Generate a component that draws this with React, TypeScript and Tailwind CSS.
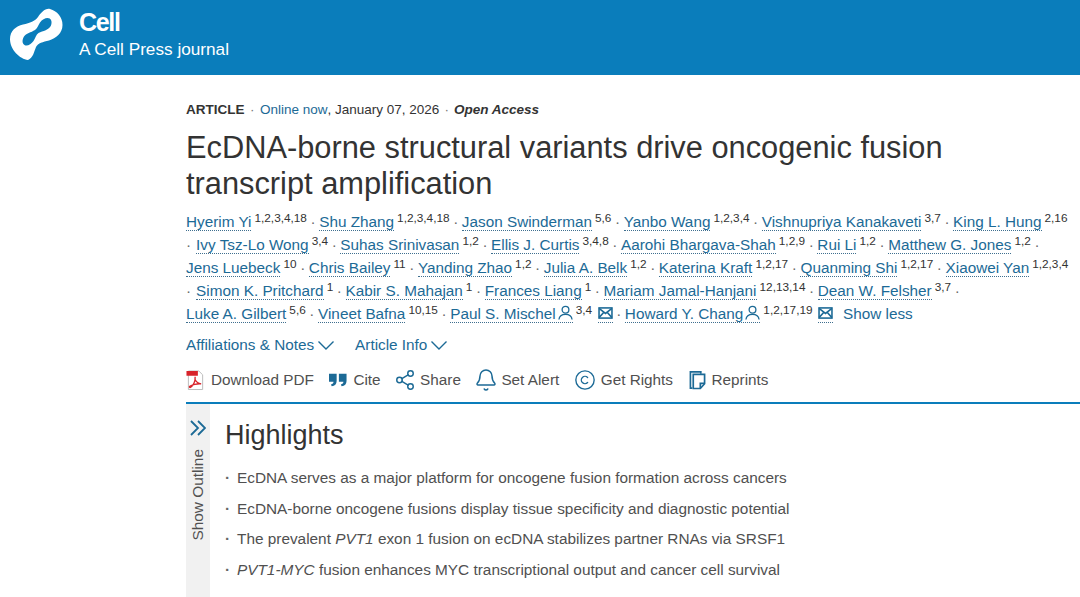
import { Copyright, Share2, Bell } from "lucide-react";

type Author = { name: string; sup?: string; person?: boolean; mail?: boolean };

const AUTHOR_LINES: { lead?: boolean; trail?: boolean; authors: Author[] }[] = [
  {
    authors: [
      { name: "Hyerim Yi", sup: "1,2,3,4,18" },
      { name: "Shu Zhang", sup: "1,2,3,4,18" },
      { name: "Jason Swinderman", sup: "5,6" },
      { name: "Yanbo Wang", sup: "1,2,3,4" },
      { name: "Vishnupriya Kanakaveti", sup: "3,7" },
      { name: "King L. Hung", sup: "2,16" },
    ],
  },
  {
    lead: true,
    trail: true,
    authors: [
      { name: "Ivy Tsz-Lo Wong", sup: "3,4" },
      { name: "Suhas Srinivasan", sup: "1,2" },
      { name: "Ellis J. Curtis", sup: "3,4,8" },
      { name: "Aarohi Bhargava-Shah", sup: "1,2,9" },
      { name: "Rui Li", sup: "1,2" },
      { name: "Matthew G. Jones", sup: "1,2" },
    ],
  },
  {
    authors: [
      { name: "Jens Luebeck", sup: "10" },
      { name: "Chris Bailey", sup: "11" },
      { name: "Yanding Zhao", sup: "1,2" },
      { name: "Julia A. Belk", sup: "1,2" },
      { name: "Katerina Kraft", sup: "1,2,17" },
      { name: "Quanming Shi", sup: "1,2,17" },
      { name: "Xiaowei Yan", sup: "1,2,3,4" },
    ],
  },
  {
    lead: true,
    trail: true,
    authors: [
      { name: "Simon K. Pritchard", sup: "1" },
      { name: "Kabir S. Mahajan", sup: "1" },
      { name: "Frances Liang", sup: "1" },
      { name: "Mariam Jamal-Hanjani", sup: "12,13,14" },
      { name: "Dean W. Felsher", sup: "3,7" },
    ],
  },
  {
    authors: [
      { name: "Luke A. Gilbert", sup: "5,6" },
      { name: "Vineet Bafna", sup: "10,15" },
      { name: "Paul S. Mischel", sup: "3,4", person: true, mail: true },
      { name: "Howard Y. Chang", sup: "1,2,17,19", person: true, mail: true },
    ],
  },
];

function Dot() {
  return <span className="mx-[3.600px] text-[#6b6b6b]">·</span>;
}

function PersonIcon() {
  return (
    <svg viewBox="0 0 16 16" className="ml-[2px] inline h-[15px] w-[15px] align-[-1px]" fill="none" stroke="currentColor" strokeWidth="1.4">
      <circle cx="8" cy="5" r="3.6" />
      <path d="M1 15.500c.4-3.500 3-5.500 7-5.500s6.600 2 7 5.500" />
    </svg>
  );
}

function MailIcon() {
  return (
    <svg viewBox="0 0 16 13" className="inline h-[12px] w-[15px] align-[0px]" fill="none" stroke="currentColor" strokeWidth="1.700">
      <rect x="1" y="1" width="14" height="11" />
      <path d="M1 1.500l7 5.500 7-5.500M1 11.500l5-5.500M15 11.500l-5-5.500" />
    </svg>
  );
}

function AuthorName({ author }: { author: Author }) {
  return (
    <>
      <span className="border-b border-dotted border-[#3f6f8f] text-[#1c6a96]">
        {author.name}
        {author.person && <PersonIcon />}
      </span>
      <sup className="ml-[3px] top-[-5px] text-[11.800px] text-[#333]">{author.sup}</sup>
      {author.mail && (
        <span className="ml-[5.500px] border-b border-dotted border-[#3f6f8f] text-[#1c6a96]">
          <MailIcon />
        </span>
      )}
    </>
  );
}

function Chevron() {
  return (
    <svg viewBox="0 0 16 9" className="h-[9px] w-[16px]" fill="none" stroke="currentColor" strokeWidth="1.400">
      <path d="M.5.500 8 8 15.500.5" />
    </svg>
  );
}

function PdfIcon() {
  return (
    <svg viewBox="0 0 20 22" className="h-[21px] w-[19px]">
      <path d="M2.500 1h11l4 4v15.500h-15z" fill="#fff" stroke="#b9b9b9" strokeWidth="1" />
      <rect x="0.5" y="1" width="12" height="5" fill="#d8232a" />
      <path d="M5 18c3-2 5-7 4.600-11M5 18c-1 1-2 0-1-1 2-1.500 8-3 12-2.500M9.500 10c1 2 3 4 6.500 4.500" fill="none" stroke="#d8232a" strokeWidth="1.400" />
    </svg>
  );
}

function QuoteIcon() {
  return (
    <svg viewBox="0 0 20 16" className="h-[16px] w-[18px]" fill="#1c6a96">
      <path d="M0 1h8.500v8c0 3.500-2 5.500-5.500 6l-.8-2c1.800-.5 2.800-1.500 2.800-3H0zM11 1h8.500v8c0 3.500-2 5.500-5.500 6l-.8-2c1.800-.5 2.800-1.500 2.800-3H11z" />
    </svg>
  );
}

function ReprintsIcon() {
  return (
    <svg viewBox="0 0 18 20" className="h-[20px] w-[17px]" fill="none" stroke="#1c6a96" strokeWidth="1.800">
      <path d="M3.500 18.500H1.500V1.500h11v2" />
      <path d="M4.500 4h12v10l-4.500 5h-7.500z" />
      <path d="M16.500 13.500h-4.500v5" />
    </svg>
  );
}

function ToolLink({ icon, label }: { icon: React.ReactNode; label: string }) {
  return (
    <div className="flex items-center gap-[6px]">
      <span className="flex items-center justify-center">{icon}</span>
      <span>{label}</span>
    </div>
  );
}

const HIGHLIGHTS: React.ReactNode[] = [
  "EcDNA serves as a major platform for oncogene fusion formation across cancers",
  "EcDNA-borne oncogene fusions display tissue specificity and diagnostic potential",
  <>
    The prevalent <em>PVT1</em> exon 1 fusion on ecDNA stabilizes partner RNAs via SRSF1
  </>,
  <>
    <em>PVT1-MYC</em> fusion enhances MYC transcriptional output and cancer cell survival
  </>,
];

export default function App() {
  return (
    <div className="h-[597px] w-[1080px] overflow-hidden bg-white font-['Liberation_Sans',Arial,sans-serif]">
      <header className="flex h-[75px] items-start bg-[#0a7dbb] pl-[5px] text-white">
        <svg viewBox="5 5 65 60" className="mt-[5px] h-[60px] w-[65px]">
          <path
            fill="#fff"
            fillRule="evenodd"
            d="M50 9C57 11 62.500 17 62.500 25C62.500 33 56 38.500 49 40.500C43 42 38 43 36 47C34 52 33 58 28 60C20 59 10 50 10 39C10 31 16 26 23 24.500C30 23 35 21 38 17C41 13 45 8 50 9ZM47.500 18C51 18 52.500 21.500 51 25.500C49 30 43 31 38.500 33C36 34.500 35.500 38 33.500 41C31 44.500 27 46.500 24.500 45C22 43.500 22 40 24 36.500C26 33.500 31 32.500 35 30C37.500 28.500 38 25.500 40 22.500C42 19.500 45 18 47.500 18Z"
          />
        </svg>
        <div className="ml-[9px] flex flex-col">
          <div className="mt-[8px] text-[25px] font-bold leading-[28px] tracking-[-1.300px]">Cell</div>
          <div className="mt-[3px] text-[17.2px] leading-[20px]">A Cell Press journal</div>
        </div>
      </header>

      <main className="pl-[186px]">
        <div className="mt-[26px] flex items-center text-[13.5px] leading-[18px] text-[#333]">
          <span className="font-bold">ARTICLE</span>
          <span className="mx-[5.500px] text-[#777]">·</span>
          <span className="text-[#1c6a96]">Online now</span>
          <span>, January 07, 2026</span>
          <span className="mx-[5px] text-[#777]">·</span>
          <span className="font-bold italic">Open Access</span>
        </div>

        <h1 className="mt-[11px] w-[800px] text-[30.8px] font-normal leading-[36px] text-[#333]">
          EcDNA-borne structural variants drive oncogenic fusion transcript amplification
        </h1>

        <div className="mt-[8px] whitespace-nowrap text-[15.3px] leading-[23px]">
          {AUTHOR_LINES.map((line, i) => (
            <div key={i}>
              {line.lead && <span className="mr-[5px] text-[#6b6b6b]">·</span>}
              {line.authors.map((author, j) => (
                <span key={author.name}>
                  {j > 0 && <Dot />}
                  <AuthorName author={author} />
                </span>
              ))}
              {line.trail && <Dot />}
              {i === 4 && <span className="ml-[10px] text-[#1c6a96]">Show less</span>}
            </div>
          ))}
        </div>

        <div className="mt-[8px] flex items-center gap-[21px] text-[15.3px] leading-[24px] text-[#1c6a96]">
          <div className="flex items-center gap-[4px]">
            Affiliations &amp; Notes <Chevron />
          </div>
          <div className="flex items-center gap-[4px]">
            Article Info <Chevron />
          </div>
        </div>

        <div className="mt-[11px] flex h-[24px] items-center gap-[15.500px] text-[15.3px] text-[#505050]">
          <ToolLink icon={<PdfIcon />} label="Download PDF" />
          <ToolLink icon={<QuoteIcon />} label="Cite" />
          <ToolLink icon={<Share2 className="-mx-[2px] h-[22px] w-[22px] text-[#1c6a96]" strokeWidth={1.6} />} label="Share" />
          <ToolLink icon={<Bell className="-mx-[2.500px] h-[24px] w-[24px] text-[#1c6a96]" strokeWidth={1.5} />} label="Set Alert" />
          <ToolLink icon={<Copyright className="-mx-[1px] h-[22px] w-[22px] text-[#1c6a96]" strokeWidth={1.5} />} label="Get Rights" />
          <ToolLink icon={<ReprintsIcon />} label="Reprints" />
        </div>

        <div className="mt-[10px] flex border-t-2 border-[#0a7dbb]">
          <aside className="flex h-[200px] w-[24px] flex-col items-center bg-[#f1f1f1] pt-[16px]">
            <svg viewBox="0 0 16 16" className="h-[16px] w-[16px]" fill="none" stroke="#1c6a96" strokeWidth="1.800">
              <path d="M1 1l7 7-7 7M8 1l7 7-7 7" />
            </svg>
            <span className="mt-[13px] rotate-180 text-[15.4px] leading-[18px] text-[#505050] [writing-mode:vertical-rl]">
              Show Outline
            </span>
          </aside>
          <section className="ml-[15px]">
            <h2 className="mt-[16px] text-[27px] font-normal leading-[30px] text-[#333]">Highlights</h2>
            <ul className="mt-[17px] flex flex-col gap-[9.500px] text-[15.36px] leading-[21px] text-[#505050]">
              {HIGHLIGHTS.map((text, i) => (
                <li key={i} className="flex">
                  <span className="w-[12px] font-bold text-[#666]">·</span>
                  <span>{text}</span>
                </li>
              ))}
            </ul>
          </section>
        </div>
      </main>
    </div>
  );
}
